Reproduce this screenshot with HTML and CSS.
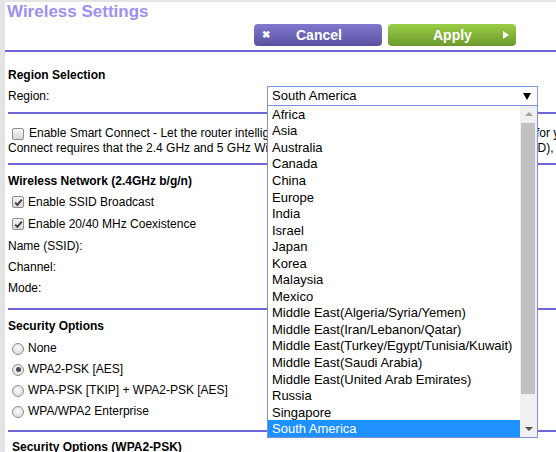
FILE: index.html
```html
<!DOCTYPE html>
<html>
<head>
<meta charset="utf-8">
<link rel="stylesheet" href="styles.css">
</head>
<body>
<div class="page">
  <div class="title">Wireless Settings</div>
  <div class="toolbar">
    <button class="btn btn-cancel"><span class="x">&#10006;</span><span class="lbl">Cancel</span></button>
    <button class="btn btn-apply"><span class="lbl">Apply</span><span class="tri"></span></button>
  </div>
  <div class="rule rule-top"></div>

  <div class="content">
    <div class="heading h-region">Region Selection</div>
    <div class="row region-row">
      <span class="label">Region:</span>
      <div class="select"><span>South America</span><span class="sel-arrow"></span></div>
    </div>
    <div class="rule r1"></div>

    <div class="smart">
      <div class="line1"><span class="cb"></span>Enable Smart Connect - Let the router intelligently select the best WiFi band (2.4GHz or 5GHz) for your devices. Smart</div>
      <div class="line2">Connect requires that the 2.4 GHz and 5 GHz WiFi networks use the same WiFi network name (SSID), security option and password.</div>
    </div>
    <div class="rule r2"></div>

    <div class="heading h-wn">Wireless Network (2.4GHz b/g/n)</div>
    <div class="row opt first"><span class="cb checked"><svg width="9" height="9" viewBox="0 0 9 9"><path d="M1.2 4.6 L3.4 6.8 L7.8 1.6" fill="none" stroke="#3a3a3a" stroke-width="1.8"/></svg></span>Enable SSID Broadcast</div>
    <div class="row opt"><span class="cb checked"><svg width="9" height="9" viewBox="0 0 9 9"><path d="M1.2 4.6 L3.4 6.8 L7.8 1.6" fill="none" stroke="#3a3a3a" stroke-width="1.8"/></svg></span>Enable 20/40 MHz Coexistence</div>
    <div class="row">Name (SSID):</div>
    <div class="row short">Channel:</div>
    <div class="row">Mode:</div>
    <div class="rule r3"></div>

    <div class="heading h-sec">Security Options</div>
    <div class="row radio-row"><span class="rb"></span>None</div>
    <div class="row radio-row"><span class="rb on"></span>WPA2-PSK [AES]</div>
    <div class="row radio-row"><span class="rb"></span>WPA-PSK [TKIP] + WPA2-PSK [AES]</div>
    <div class="row radio-row"><span class="rb"></span>WPA/WPA2 Enterprise</div>
    <div class="rule r4"></div>
    <div class="heading h-sec2">Security Options (WPA2-PSK)</div>
  </div>

  <div class="dropdown">
    <ul class="options">
      <li>Africa</li>
      <li>Asia</li>
      <li>Australia</li>
      <li>Canada</li>
      <li>China</li>
      <li>Europe</li>
      <li>India</li>
      <li>Israel</li>
      <li>Japan</li>
      <li>Korea</li>
      <li>Malaysia</li>
      <li>Mexico</li>
      <li>Middle East(Algeria/Syria/Yemen)</li>
      <li>Middle East(Iran/Lebanon/Qatar)</li>
      <li>Middle East(Turkey/Egypt/Tunisia/Kuwait)</li>
      <li>Middle East(Saudi Arabia)</li>
      <li>Middle East(United Arab Emirates)</li>
      <li>Russia</li>
      <li>Singapore</li>
      <li class="selected">South America</li>
    </ul>
    <div class="scrollbar">
      <span class="arrow-up"></span>
      <div class="thumb"></div>
      <span class="arrow-down"></span>
    </div>
  </div>
</div>
</body>
</html>
```

FILE: styles.css
```css
html, body {
  margin: 0;
  padding: 0;
  width: 556px;
  height: 452px;
  overflow: hidden;
  background: #e4e4e4;
}

.page {
  position: relative;
  margin: 2px 0 0 5px;
  height: 450px;
  background: #fff;
  font-family: "Liberation Sans", Arial, sans-serif;
  font-size: 12px;
  color: #000;
  overflow: hidden;
}

.title {
  height: 20px;
  line-height: 19px;
  padding-left: 2px;
  font-size: 17px;
  font-weight: bold;
  color: #9d90f4;
}

.toolbar {
  display: flex;
  gap: 6px;
  margin-top: 2px;
  padding-left: 249px;
  height: 22px;
}

.btn {
  width: 128px;
  height: 22px;
  border: 0;
  border-radius: 4px;
  padding: 0;
  display: flex;
  align-items: center;
  font-family: "Liberation Sans", Arial, sans-serif;
  font-weight: bold;
  font-size: 14px;
  color: #fff;
}

.btn-cancel {
  background: linear-gradient(#8079cf, #5a529f);
}

.btn-cancel .x {
  font-size: 10px;
  width: 8px;
  margin-left: 8px;
  line-height: 1;
}

.btn-cancel .lbl {
  margin-left: 26px;
}

.btn-apply {
  background: linear-gradient(#9acd45, #6b9a2c);
}

.btn-apply .lbl {
  margin-left: 45px;
}

.btn-apply .tri {
  margin-left: 31px;
  width: 0;
  height: 0;
  border-top: 4px solid transparent;
  border-bottom: 4px solid transparent;
  border-left: 6px solid #fff;
}

.rule {
  height: 2px;
  background: #6e66d8;
}

.rule-top {
  margin-top: 4px;
}

.content {
  padding-left: 3px;
}

.heading {
  font-weight: bold;
  height: 16px;
  line-height: 16px;
}

.h-region { margin-top: 15px; }
.h-wn { margin-top: 8px; }
.h-sec { margin-top: 8px; }
.h-sec2 { margin-top: 7px; padding-left: 4px; }

.row {
  height: 22px;
  line-height: 22px;
  display: flex;
  align-items: center;
}

.row.short {
  height: 20px;
  line-height: 20px;
}

.region-row {
  height: 20px;
  margin-top: 2px;
  display: grid;
  grid-template-columns: 259px 271px;
  align-items: center;
}

.select {
  box-sizing: border-box;
  height: 20px;
  border: 1px solid #7f9ddc;
  display: flex;
  align-items: center;
  justify-content: space-between;
  padding: 0 6px 0 4px;
  font-size: 13px;
  line-height: 18px;
}

.sel-arrow {
  width: 0;
  height: 0;
  border-left: 4px solid transparent;
  border-right: 4px solid transparent;
  border-top: 7px solid #000;
}

.r1 { margin-top: 7px; }

.smart {
  margin-top: 12px;
  line-height: 15px;
  white-space: nowrap;
}

.line1 {
  display: flex;
  align-items: center;
  padding-left: 4px;
}

.r2 { margin-top: 7px; }

.cb {
  box-sizing: border-box;
  width: 12px;
  height: 12px;
  border: 1px solid #8e8e8e;
  border-radius: 2px;
  background: linear-gradient(#f4f4f4, #d8d8d8);
  margin-right: 5px;
  display: inline-flex;
  align-items: center;
  justify-content: center;
  flex: none;
}

.opt {
  padding-left: 4px;
}

.opt.first {
  margin-top: 2px;
}

.opt .cb {
  margin-right: 4px;
}

.r3 { margin-top: 9px; }

.radio-row {
  height: 21px;
  line-height: 21px;
  padding-left: 4px;
}

.h-sec + .radio-row { margin-top: 4px; }

.rb {
  box-sizing: border-box;
  width: 12px;
  height: 12px;
  border-radius: 50%;
  border: 1px solid #8e8e8e;
  background: radial-gradient(circle at 50% 40%, #fafafa, #d6d6d6);
  margin-right: 4px;
  display: inline-flex;
  align-items: center;
  justify-content: center;
  flex: none;
}

.rb.on::after {
  content: "";
  width: 5px;
  height: 5px;
  border-radius: 50%;
  background: #4a4a4a;
}

.r4 { margin-top: 8px; }

/* dropdown popup */
.dropdown {
  position: absolute;
  left: 262px;
  top: 103px;
  width: 271px;
  height: 333px;
  box-sizing: border-box;
  border: 1px solid #7f8fdc;
  background: #fff;
  display: flex;
}

.options {
  list-style: none;
  margin: 0;
  padding: 0;
  flex: 1;
  display: grid;
  grid-template-rows: repeat(20, 1fr);
  font-size: 13px;
}

.options li {
  padding-left: 4px;
  display: flex;
  align-items: center;
  white-space: nowrap;
}

.options li.selected {
  background: #1e90ff;
  color: #fff;
}

.scrollbar {
  width: 17px;
  background: #f0f0f0;
  position: relative;
  flex: none;
}

.thumb {
  position: absolute;
  left: 1px;
  right: 2px;
  top: 17px;
  height: 271px;
  background: #c1c1c1;
}

.arrow-up {
  position: absolute;
  left: 5px;
  top: 6px;
  width: 0;
  height: 0;
  border-left: 4px solid transparent;
  border-right: 4px solid transparent;
  border-bottom: 4px solid #a3a3a3;
}

.arrow-down {
  position: absolute;
  left: 5px;
  bottom: 6px;
  width: 0;
  height: 0;
  border-left: 4px solid transparent;
  border-right: 4px solid transparent;
  border-top: 4px solid #505050;
}
```
